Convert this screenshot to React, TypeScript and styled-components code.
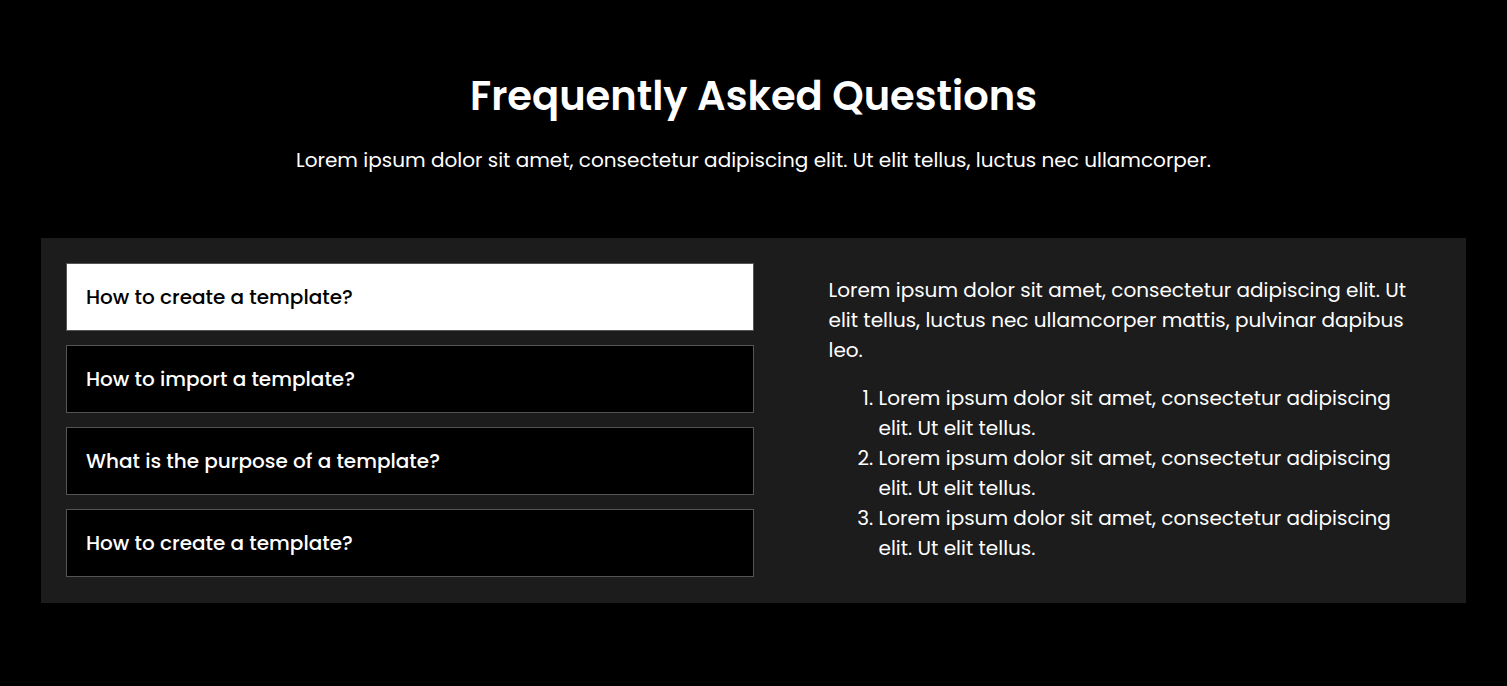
import React from 'react';
import styled, { createGlobalStyle } from 'styled-components';

const GlobalStyle = createGlobalStyle`
  * { box-sizing: border-box; }
  body {
    margin: 0;
    background-color: #000000;
    color: #FFFFFF;
    font-family: Poppins, Inter, "Noto Sans", sans-serif;
  }
`;

const Page = styled.div`
  padding: 72px 41px 83px;
`;

const Header = styled.header`
  text-align: center;
  margin-bottom: 63px;
`;

const Title = styled.h1`
  font-size: 40px;
  font-weight: 600;
  line-height: 48px;
  margin: 0 0 25px;
`;

const Subtitle = styled.p`
  font-size: 20px;
  line-height: 30px;
  margin: 0;
`;

const Panel = styled.section`
  background-color: #1C1C1C;
  padding: 25px 25px 26px;
  display: grid;
  grid-template-columns: 1fr 1fr;
`;

const QuestionList = styled.div`
  display: flex;
  flex-direction: column;
  gap: 14px;
`;

const Question = styled.button<{ active?: boolean }>`
  display: flex;
  align-items: center;
  height: 68px;
  padding: 0 19px;
  border: 1px solid #555555;
  background-color: ${({ active }) => active ? '#FFFFFF' : '#000000'};
  color: ${({ active }) => active ? '#000000' : '#FFFFFF'};
  font-family: inherit;
  font-size: 20px;
  font-weight: 500;
  text-align: left;
  cursor: pointer;
`;

const Answer = styled.div`
  padding: 12px 35px 0 75px;
  font-size: 20px;
  line-height: 30px;
`;

const AnswerText = styled.p`
  margin: 0 0 18px;
`;

const Steps = styled.ol`
  margin: 0;
  padding-left: 50px;
`;

const questions = [
  'How to create a template?',
  'How to import a template?',
  'What is the purpose of a template?',
  'How to create a template?',
];

const step = 'Lorem ipsum dolor sit amet, consectetur adipiscing elit. Ut elit tellus.';

export default function App() {
  return (
    <>
      <GlobalStyle />
      <Page>
        <Header>
          <Title>Frequently Asked Questions</Title>
          <Subtitle>
            Lorem ipsum dolor sit amet, consectetur adipiscing elit. Ut elit tellus, luctus nec ullamcorper.
          </Subtitle>
        </Header>
        <Panel>
          <QuestionList>
            {questions.map((q, i) => (
              <Question key={i} active={i === 0}>{q}</Question>
            ))}
          </QuestionList>
          <Answer>
            <AnswerText>
              Lorem ipsum dolor sit amet, consectetur adipiscing elit. Ut elit tellus, luctus nec ullamcorper mattis, pulvinar dapibus leo.
            </AnswerText>
            <Steps>
              <li>{step}</li>
              <li>{step}</li>
              <li>{step}</li>
            </Steps>
          </Answer>
        </Panel>
      </Page>
    </>
  );
}
